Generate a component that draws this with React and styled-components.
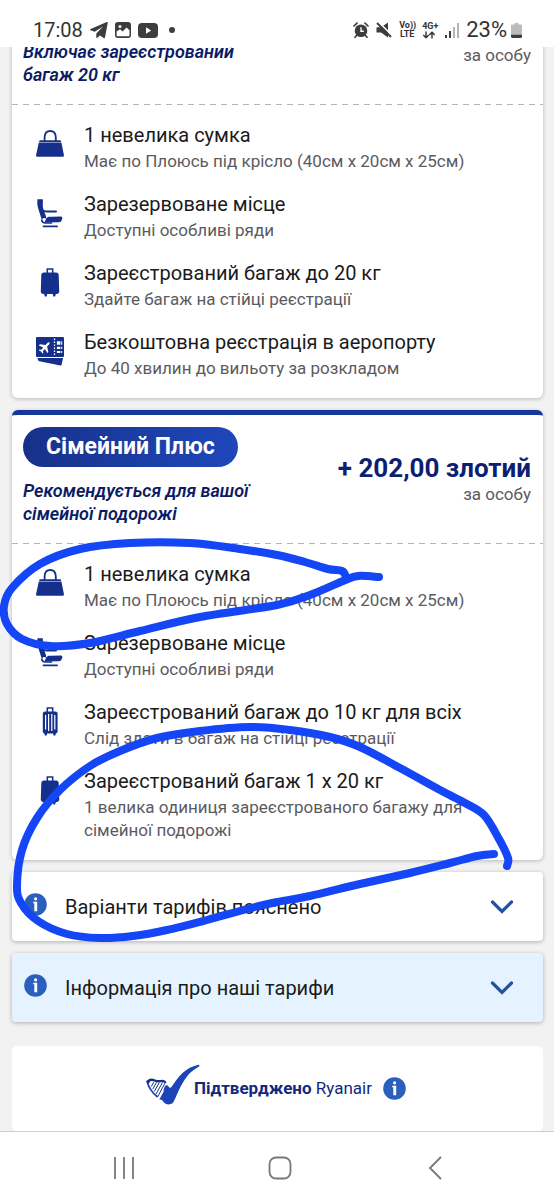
import React from 'react';
import styled, { createGlobalStyle } from 'styled-components';

const NAVY = '#15308c';
const LINK_BLUE = '#2b5fbd';
const INK = '#1546f5';

const GlobalStyle = createGlobalStyle`
  *, *::before, *::after { box-sizing: border-box; }
  body {
    margin: 0;
    background: #f2f2f2;
    font-family: Roboto, "Noto Sans", sans-serif;
    color: #1b1b1b;
  }
`;

const Page = styled.div`
  position: relative;
  min-height: 100vh;
  display: flex;
  flex-direction: column;
  overflow: hidden;
`;

/* ---------- system bars ---------- */

const StatusBar = styled.header`
  position: relative;
  z-index: 1;
  display: flex;
  align-items: center;
  justify-content: space-between;
  height: 47px;
  padding: 13px 32px 0 33px;
  background: #fff;
  color: #333;
`;

const StatusGroup = styled.div`
  display: flex;
  align-items: center;
  gap: 7px;
  svg { display: block; flex: none; }
`;

const Clock = styled.time`
  font-size: 20px;
  line-height: 24px;
`;

const Battery = styled.span`
  display: flex;
  align-items: center;
  gap: 4px;
  font-size: 22px;
  line-height: 24px;
`;

const Network = styled.span`
  width: 16px;
  font-size: 9px;
  line-height: 9px;
  font-weight: 700;
  text-align: center;
  white-space: nowrap;
`;

const NavBar = styled.nav`
  position: relative;
  z-index: 1;
  display: flex;
  justify-content: space-between;
  align-items: center;
  height: 69px;
  padding: 4px 99px 0 104px;
  border-top: 1px solid #cfcfcf;
  background: #fff;
`;

const NavButton = styled.button`
  display: flex;
  align-items: center;
  justify-content: center;
  width: 40px;
  height: 40px;
  padding: 0;
  border: 0;
  background: none;
  color: #777;
`;

/* ---------- fares ---------- */

const Main = styled.main`
  flex: 1;
  display: flex;
  flex-direction: column;
  gap: 12px;
  margin-top: -7px;
  padding: 0 11px 0 12px;
`;

const Card = styled.section`
  background: #fff;
  border-top: ${p => (p.$accent ? '5px solid #16369c' : '0')};
  border-radius: ${p => (p.$accent ? '6px' : '0 0 6px 6px')};
  box-shadow: 0 1px 4px rgba(0, 0, 0, 0.24);
`;

const FareHeader = styled.div`
  display: flex;
  justify-content: space-between;
  align-items: flex-end;
  padding: ${p => (p.$roomy ? '12px' : '0')} 12px 18px 11px;
`;

const Badge = styled.h2`
  width: fit-content;
  margin: 0 0 12px;
  padding: 0 23px;
  border-radius: 20px;
  background: linear-gradient(90deg, #173189, #1f47bb);
  color: #fff;
  font-size: 23px;
  line-height: 40px;
  font-weight: 700;
`;

const Tagline = styled.p`
  width: 240px;
  margin: 0;
  color: #0b1c66;
  font-size: 18px;
  line-height: 23px;
  font-weight: 600;
  font-style: italic;
`;

const PriceBlock = styled.div`
  padding-bottom: 19px;
  text-align: right;
`;

const Price = styled.div`
  color: #0c1f73;
  font-size: 26px;
  line-height: 30px;
  font-weight: 700;
`;

const PerPerson = styled.div`
  color: #5b5b5f;
  font-size: 17px;
  line-height: 23px;
`;

const Dashes = styled.hr`
  height: 1px;
  margin: 0;
  border: 0;
  background: repeating-linear-gradient(90deg, #b4b4b4 0 6px, transparent 6px 11px);
`;

const Features = styled.ul`
  display: flex;
  flex-direction: column;
  gap: 16px;
  margin: 0;
  padding: 15px 24px 18px;
  list-style: none;
`;

const Feature = styled.li`
  display: flex;
  gap: 20px;
`;

const FeatureIcon = styled.svg`
  flex: none;
  width: 28px;
  height: 29px;
  margin-top: 10px;
  color: ${NAVY};
`;

const FeatureTitle = styled.h3`
  margin: 0;
  font-size: 20px;
  line-height: 30px;
  font-weight: 400;
`;

const FeatureNote = styled.p`
  margin: 0;
  color: #5b5b5f;
  font-size: 17px;
  line-height: 23px;
`;

const Disclosure = styled.button`
  display: flex;
  align-items: center;
  width: 100%;
  height: 69px;
  padding: 0 29px 0 12px;
  border: 0;
  border-radius: 4px;
  background: ${p => (p.$tinted ? '#e4f3ff' : '#fff')};
  box-shadow: 0 1px 4px rgba(0, 0, 0, 0.28);
  color: inherit;
  font: inherit;
  font-size: 20px;
  line-height: 30px;
  text-align: left;
`;

const DisclosureLabel = styled.span`
  flex: 1;
  padding-left: 18px;
`;

const LeadIcon = styled.span`
  display: flex;
  padding-bottom: 4px;
`;

const Approved = styled.footer`
  display: flex;
  align-items: center;
  justify-content: center;
  flex: 1;
  min-height: 84px;
  margin-top: 12px;
  padding-right: 3px;
  border-radius: 5px;
  background: #fff;
  color: #14287d;
  font-size: 17px;
  line-height: 23px;
  svg { flex: none; }
`;

const ApprovedMark = styled.span`
  display: flex;
  padding-bottom: 8px;
`;

const ApprovedText = styled.span`
  margin: 0 11px 0 -6px;
`;

const Ink = styled.svg`
  position: absolute;
  z-index: 2;
  top: 0;
  left: 0;
  pointer-events: none;
`;

/* ---------- drawings ---------- */

const BagIcon = () => (
  <FeatureIcon viewBox="0 0 28 29" aria-hidden="true">
    <path d="M8.600 11V7.200C8.800 3 11 1 14.200 1s5.400 2 5.600 6.200V11" fill="none" stroke="currentColor" strokeWidth="1.800" />
    <path d="M3.600 10.300h21l.5 1.600H3.100z" fill="currentColor" />
    <path d="M2.800 12.600h22.600l2.500 12.500c.2 1-.4 1.700-1.400 1.700H1.500c-1 0-1.600-.7-1.400-1.700z" fill="currentColor" />
  </FeatureIcon>
);

const SeatIcon = () => (
  <FeatureIcon viewBox="0 0 28 29" aria-hidden="true">
    <path d="M1.400.3h5.400c.4 3-.4 5.600.2 8.700l3 8.300c.4 1.400-.2 3-1.900 3.300-1.500.2-2.500-.4-2.900-1.700L1.900 8.400C1.200 5.800 1.300 3 1.400.3z" fill="currentColor" />
    <path d="M7.500 11.800c1.200.5 2.400.6 3.800.6H20" fill="none" stroke="currentColor" strokeWidth="2" strokeLinecap="round" />
    <path d="M9.800 20.300c1.200-2.800 3.400-2.700 5.700-2.500l9.300-.3c1.400 0 1.800 1 1.500 2l-.7 2c-.4 1.200-1.300 1.700-2.600 1.700l-14.600.200z" fill="currentColor" />
    <path d="M5.800 21c.2 2.300 1.500 3 3.600 3h6M7.500 27.400h13.600" fill="none" stroke="currentColor" strokeWidth="1.700" strokeLinecap="round" />
    <circle cx="8" cy="20.300" r="1.400" fill="#fff" />
  </FeatureIcon>
);

const CaseIcon = () => (
  <FeatureIcon viewBox="0 0 28 29" aria-hidden="true">
    <path d="M11.300 5V1.100h5.400V5" fill="none" stroke="currentColor" strokeWidth="1.500" />
    <path d="M8 4.400h12c1.600 0 2.600 1 2.700 2.500l.5 16.300c0 1.800-1 2.800-2.600 2.800H7.400c-1.600 0-2.600-1-2.600-2.800l.5-16.300C5.400 5.400 6.400 4.400 8 4.400z" fill="currentColor" />
    <path d="M8 25.500h3.300l-.6 3H8.900zM16.700 25.500H20l-.9 3h-1.800z" fill="currentColor" />
  </FeatureIcon>
);

const CabinCaseIcon = () => (
  <FeatureIcon viewBox="0 0 28 29" aria-hidden="true">
    <path d="M11.300 5V1h5.400v4" fill="none" stroke="currentColor" strokeWidth="1.500" />
    <rect x="6.800" y="4.500" width="14.800" height="22" rx="2.200" fill="currentColor" />
    <path d="M9.600 8v14.500M12.600 7v17M15.800 7v17M18.800 8v14.500" stroke="#fff" strokeWidth="1.200" />
    <path d="M8.200 26h3l-.5 2.600H8.900zM17 26h3l-.7 2.600h-1.800z" fill="currentColor" />
  </FeatureIcon>
);

const TicketIcon = () => (
  <FeatureIcon viewBox="0 0 28 29" aria-hidden="true">
    <path d="M1 0h26.200c.4 0 .8.300.8.800v18.400c0 .5-.4.800-.8.800H1c-.6 0-1-.3-1-.8V.8C0 .3.400 0 1 0z" fill="currentColor" />
    <path d="M1.300 21h25.800l-1.600 6.900c-.1.600-.5.800-1.100.700L3.400 24.200c-.6-.1-1-.4-1.200-1z" fill="currentColor" />
    <path d="M18.500 1.500v18" stroke="#fff" strokeWidth="1.300" strokeDasharray="1.500 1.500" />
    <path d="M20.900 4.200h3.500v3.500h-3.500zM20.900 9.700h3.500V12h-3.500zM20.900 14h3.500v2h-3.500zM25.200 4.200h1v3.500h-1zM25.200 9.700h1V12h-1zM25.200 14h1v2h-1z" fill="#fff" />
    <path
      transform="translate(1.200 2.500) rotate(42 8 7.500)"
      d="M8 1.300c.7 0 1.100.8 1.100 1.700v2.900l4.600 3.200v1.500L9.100 9.200v2.900l1.500 1.200v1L8 13.700l-2.600.6v-1l1.500-1.200V9.200l-4.600 1.400V9.100l4.600-3.200V3C6.900 2.100 7.300 1.300 8 1.300z"
      fill="#fff"
    />
  </FeatureIcon>
);

const InfoIcon = () => (
  <svg width="23" height="23" viewBox="0 0 23 23" aria-hidden="true">
    <circle cx="11.500" cy="11.500" r="11.300" fill={LINK_BLUE} />
    <circle cx="11.600" cy="5.800" r="1.600" fill="#fff" />
    <path d="M9.200 8.700h4v9.600h-2.900v-8H9.200z" fill="#fff" />
  </svg>
);

const Chevron = () => (
  <svg width="24" height="14" viewBox="0 0 24 14" aria-hidden="true">
    <path d="M2.500 2l9.500 9.500L21.500 2" fill="none" stroke="#24529f" strokeWidth="3.200" strokeLinecap="round" />
  </svg>
);

const HarpCheck = () => (
  <svg width="54" height="41" viewBox="0 0 54 41" aria-hidden="true">
    <path
      d="M13.300 35.500c1.300-2 2.500-4.500 4.200-7.400.3-5.600 2.300-7.300 4-6.700 1.300.5 1.500 2.400 2.600 2.400 2 0 5.500-8.300 12.400-14.800C41.500 4.500 47 2 52.400.8c1.300-.2 1.500 1.300.4 1.900-8.600 4.300-13.300 10.800-18 19.600-3 5.600-5 11.800-7.500 16-1.600 2.600-7 3-9.300.3-1.300-1.500-1.900-3.500-4.700-3.100z"
      fill="#1c44b8"
    />
    <path d="M1.500 18.500c2-3.800 4.600-3.200 7.200-2 3.300 1.500 5.800.3 8.800.6 1 .1 1.600.8 1.900 1.800" fill="none" stroke="#15308c" strokeWidth="2.400" />
    <path d="M1.800 17.500c-.3 3 1 5 2.600 7.600 1.800 3 3.700 5.400 7.200 7.800" fill="none" stroke="#1c44b8" strokeWidth="1.800" />
    <path d="M11.500 33 19.300 18.500M10 30l6.500-11.500M8.300 27.500l5-9M6.800 25l3.700-6.700M5.300 22.500l2.400-4.300" stroke="#15308c" strokeWidth="1" />
    <circle cx="2" cy="17.800" r="1.700" fill="#15308c" />
  </svg>
);

const TelegramGlyph = () => (
  <svg width="18" height="17" viewBox="0 0 18 17" aria-hidden="true">
    <path d="M17.800.6 15 15.600c-.1.700-.8.900-1.400.5L10 13.400l-2.700 2.400c-.4.400-1 .2-1-.4v-3.800L13 4.500 4.700 9.700.6 8.300C-.2 8-.2 7.300.7 6.900L16.700.1c.7-.3 1.200 0 1.100.5z" fill="#3d3d3d" />
  </svg>
);

const GalleryGlyph = () => (
  <svg width="16" height="16" viewBox="0 0 16 16" aria-hidden="true">
    <rect width="16" height="16" rx="3" fill="#3d3d3d" />
    <circle cx="5" cy="4.500" r="1.500" fill="#fff" />
    <path d="M1.600 9.500 5 7.300l2.600 2.200 3.900-3.900 3 2.700v4.700c0 .8-.6 1.300-1.300 1.300H2.900c-.8 0-1.300-.5-1.300-1.300z" fill="#fff" />
  </svg>
);

const VideoGlyph = () => (
  <svg width="20" height="15" viewBox="0 0 20 15" aria-hidden="true">
    <rect width="20" height="15" rx="4" fill="#3d3d3d" />
    <path d="M8 4.300v6.400l5.200-3.200z" fill="#fff" />
  </svg>
);

const AlarmGlyph = () => (
  <svg width="16" height="16" viewBox="0 0 16 16" aria-hidden="true">
    <circle cx="8" cy="8.700" r="6.300" fill="#3d3d3d" />
    <path d="M1 4 4 1.200M15 4l-3-2.800M3.500 13.500 2 15.300M12.500 13.500l1.500 1.800" stroke="#3d3d3d" strokeWidth="1.700" strokeLinecap="round" />
    <path d="M8 5.200v4h2.800" fill="none" stroke="#fff" strokeWidth="1.400" />
  </svg>
);

const MuteGlyph = () => (
  <svg width="16" height="16" viewBox="0 0 16 16" aria-hidden="true">
    <path d="M.5 5.300H5L12 .5v15l-7-5H.5z" fill="#3d3d3d" />
    <path d="M2.800.3 16 13.500" stroke="#fff" strokeWidth="1.600" />
    <path d="M1 1l14 14" stroke="#3d3d3d" strokeWidth="1.900" />
  </svg>
);

const DataArrows = () => (
  <svg width="14" height="8" viewBox="0 0 14 8" aria-hidden="true">
    <path d="M4 .5v6M1.300 4 4 6.800 6.700 4M10 7.500v-6M7.300 4 10 1.200 12.700 4" fill="none" stroke="#333" strokeWidth="1.400" />
  </svg>
);

const SignalGlyph = () => (
  <svg width="14" height="15" viewBox="0 0 14 15" aria-hidden="true">
    <path d="M1 12v3M5 8v7" stroke="#3d3d3d" strokeWidth="2" />
    <path d="M9 4v11M13 0v15" stroke="#b5b5b5" strokeWidth="2" />
  </svg>
);

const BatteryGlyph = () => (
  <svg width="11" height="15" viewBox="0 0 11 15" aria-hidden="true">
    <path d="M3.500 0h4v1.500H10c.6 0 1 .4 1 1V12H0V2.500c0-.6.4-1 1-1h2.500z" fill="#bcbcbc" />
    <path d="M0 11.800h11v1.700c0 .9-.6 1.500-1.500 1.500h-8C.6 15 0 14.400 0 13.500z" fill="#3d3d3d" />
  </svg>
);

/* ---------- freehand marks ---------- */

const LOOPS = [
  [[379, 577], [358, 576], [343, 581], [310, 595], [277, 605], [200, 617], [140, 631], [90, 643], [50, 646], [22, 639],
    [7, 624], [4, 606], [12, 588], [40, 564], [80, 549], [130, 543], [190, 543], [240, 549], [277, 555], [305, 562],
    [328, 569], [342, 571], [346, 577]],
  [[507, 866], [508, 858], [499, 839], [484, 815], [465, 803], [440, 790], [400, 768], [360, 747], [330, 737],
    [290, 730], [250, 727], [200, 731], [157, 738], [120, 751], [90, 766], [60, 790], [37, 818], [22, 850], [17, 885],
    [21, 903], [38, 921], [67, 934], [100, 938], [133, 936], [167, 930], [207, 920], [247, 909], [277, 902],
    [310, 896], [360, 884], [410, 873], [450, 863], [477, 856], [494, 854]],
];

const smooth = pts =>
  pts.reduce((d, p, i) => {
    if (i === 0) return `M${p[0]} ${p[1]}`;
    const a = pts[Math.max(i - 2, 0)];
    const b = pts[i - 1];
    const n = pts[Math.min(i + 1, pts.length - 1)];
    const c1 = [b[0] + (p[0] - a[0]) / 6, b[1] + (p[1] - a[1]) / 6];
    const c2 = [p[0] - (n[0] - b[0]) / 6, p[1] - (n[1] - b[1]) / 6];
    return `${d}C${c1[0]} ${c1[1]} ${c2[0]} ${c2[1]} ${p[0]} ${p[1]}`;
  }, '');

/* ---------- content ---------- */

const PLUS_FEATURES = [
  [BagIcon, '1 невелика сумка', 'Має по Плоюсь під крісло (40см х 20см х 25см)'],
  [SeatIcon, 'Зарезервоване місце', 'Доступні особливі ряди'],
  [CaseIcon, 'Зареєстрований багаж до 20 кг', 'Здайте багаж на стійці реєстрації'],
  [TicketIcon, 'Безкоштовна реєстрація в аеропорту', 'До 40 хвилин до вильоту за розкладом'],
];

const FAMILY_FEATURES = [
  [BagIcon, '1 невелика сумка', 'Має по Плоюсь під крісло (40см х 20см х 25см)'],
  [SeatIcon, 'Зарезервоване місце', 'Доступні особливі ряди'],
  [CabinCaseIcon, 'Зареєстрований багаж до 10 кг для всіх', 'Слід здати в багаж на стійці реєстрації'],
  [CaseIcon, 'Зареєстрований багаж 1 х 20 кг', '1 велика одиниця зареєстрованого багажу для сімейної подорожі'],
];

const FeatureList = ({ items }) => (
  <Features>
    {items.map(([Icon, title, note]) => (
      <Feature key={title}>
        <Icon />
        <div>
          <FeatureTitle>{title}</FeatureTitle>
          <FeatureNote>{note}</FeatureNote>
        </div>
      </Feature>
    ))}
  </Features>
);

const DisclosureRow = ({ tinted, children }) => (
  <Disclosure type="button" aria-expanded="false" $tinted={tinted}>
    <LeadIcon><InfoIcon /></LeadIcon>
    <DisclosureLabel>{children}</DisclosureLabel>
    <Chevron />
  </Disclosure>
);

export default function App() {
  return (
    <Page>
      <GlobalStyle />
      <StatusBar>
        <StatusGroup>
          <Clock>17:08</Clock>
          <TelegramGlyph />
          <GalleryGlyph />
          <VideoGlyph />
          <svg width="22" height="6" viewBox="0 0 22 6" aria-hidden="true">
            <circle cx="7" cy="3" r="3" fill="#3d3d3d" />
          </svg>
        </StatusGroup>
        <StatusGroup>
          <AlarmGlyph />
          <MuteGlyph />
          <Network>Vo))<br />LTE</Network>
          <Network>4G+<DataArrows /></Network>
          <SignalGlyph />
          <Battery>23%<BatteryGlyph /></Battery>
        </StatusGroup>
      </StatusBar>

      <Main>
        <Card>
          <FareHeader>
            <Tagline>Включає зареєстрований багаж 20 кг</Tagline>
            <PriceBlock>
              <PerPerson>за особу</PerPerson>
            </PriceBlock>
          </FareHeader>
          <Dashes />
          <FeatureList items={PLUS_FEATURES} />
        </Card>

        <Card $accent>
          <FareHeader $roomy>
            <div>
              <Badge>Сімейний Плюс</Badge>
              <Tagline>Рекомендується для вашої сімейної подорожі</Tagline>
            </div>
            <PriceBlock>
              <Price>+ 202,00 злотий</Price>
              <PerPerson>за особу</PerPerson>
            </PriceBlock>
          </FareHeader>
          <Dashes />
          <FeatureList items={FAMILY_FEATURES} />
        </Card>

        <DisclosureRow>Варіанти тарифів пояснено</DisclosureRow>
        <DisclosureRow tinted>Інформація про наші тарифи</DisclosureRow>

        <Approved>
          <ApprovedMark><HarpCheck /></ApprovedMark>
          <ApprovedText><b>Підтверджено</b> Ryanair</ApprovedText>
          <InfoIcon />
        </Approved>
      </Main>

      <NavBar>
        <NavButton type="button" aria-label="Останні">
          <svg width="22" height="22" viewBox="0 0 22 22">
            <path d="M2 0v22M11 0v22M20 0v22" stroke="currentColor" strokeWidth="1.800" />
          </svg>
        </NavButton>
        <NavButton type="button" aria-label="Головний екран">
          <svg width="24" height="24" viewBox="0 0 24 24">
            <rect x="1.500" y="1.500" width="21" height="21" rx="6.500" fill="none" stroke="currentColor" strokeWidth="1.800" />
          </svg>
        </NavButton>
        <NavButton type="button" aria-label="Назад">
          <svg width="14" height="24" viewBox="0 0 14 24">
            <path d="M13 1 2 12l11 11" fill="none" stroke="currentColor" strokeWidth="1.800" />
          </svg>
        </NavButton>
      </NavBar>

      <Ink width="554" height="960" viewBox="0 0 554 960" aria-hidden="true">
        {LOOPS.map((pts, i) => (
          <path key={i} d={smooth(pts)} fill="none" stroke={INK} strokeWidth="8" strokeLinecap="round" strokeLinejoin="round" />
        ))}
      </Ink>
    </Page>
  );
}
